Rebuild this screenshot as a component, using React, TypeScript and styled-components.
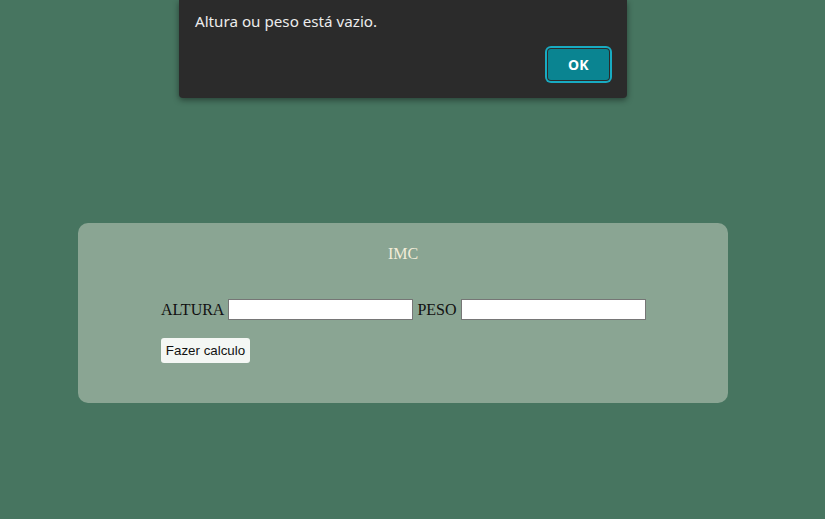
import { createGlobalStyle, styled } from "styled-components";

const GlobalStyle = createGlobalStyle`
  html, body {
    margin: 0;
    padding: 0;
    background: #477560;
    font-family: "Liberation Serif", serif;
  }
`

const Page = styled.div`
  position: relative;
  width: 825px;
  height: 519px;
  padding: 223px 0 0 78px;
  box-sizing: border-box;
`

const Card = styled.div`
  width: 650px;
  height: 180px;
  box-sizing: border-box;
  background: #8aa593;
  border-radius: 10px;
  padding: 22px 0 0 83px;
`

const Title = styled.h1`
  margin: 0 0 35px -83px;
  text-align: center;
  font-size: 16px;
  font-weight: normal;
  color: #f3ecd8;
  line-height: 18px;
`

const FieldRow = styled.div`
  display: flex;
  align-items: center;
  gap: 4px;
  font-size: 16px;
  color: #111;
  height: 22px;
`

const Label = styled.label`
  line-height: 18px;
  margin-top: 1px;
`

const TextInput = styled.input`
  width: 185px;
  height: 21px;
  box-sizing: border-box;
  border: 1px solid #767676;
  background: #fff;
  padding: 1px 2px;
  margin: 0;
`

const CalcButton = styled.button`
  margin-top: 18px;
  width: 89px;
  height: 25px;
  border: none;
  border-radius: 3px;
  background: #f4f7f4;
  font-family: "Liberation Sans", Arial, sans-serif;
  font-size: 13.33px;
  color: #111;
  padding: 0;
`

const Dialog = styled.div`
  position: absolute;
  left: 179px;
  top: 0;
  width: 448px;
  height: 98px;
  box-sizing: border-box;
  background: #2b2b2b;
  border-radius: 0 0 4px 4px;
  box-shadow: 0 2px 6px rgba(0, 0, 0, 0.45);
  padding: 10px 16px 0 16px;
  display: flex;
  flex-direction: column;
`

const Message = styled.div`
  font-family: "Noto Sans", "Open Sans", sans-serif;
  font-size: 15.2px;
  color: #ececec;
  line-height: 22px;
`

const Actions = styled.div`
  display: flex;
  justify-content: flex-end;
  margin-top: 15px;
  padding-right: 0;
`

const OkButton = styled.button`
  width: 61px;
  height: 31px;
  margin: 2px;
  border: none;
  border-radius: 3px;
  background: #0a8491;
  box-shadow: 0 0 0 1px #2b2b2b, 0 0 0 3px #18abc2;
  color: #fff;
  font-family: "Noto Sans", "Open Sans", sans-serif;
  font-weight: bold;
  font-size: 14px;
  letter-spacing: 0.3px;
  padding: 0;
`

export default function App() {
  return (
    <>
      <GlobalStyle />
      <Page>
        <Card>
          <Title>IMC</Title>
          <FieldRow>
            <Label>ALTURA</Label>
            <TextInput type="text" />
            <Label>PESO</Label>
            <TextInput type="text" />
          </FieldRow>
          <CalcButton>Fazer calculo</CalcButton>
        </Card>
        <Dialog>
          <Message>Altura ou peso está vazio.</Message>
          <Actions>
            <OkButton>OK</OkButton>
          </Actions>
        </Dialog>
      </Page>
    </>
  );
}
